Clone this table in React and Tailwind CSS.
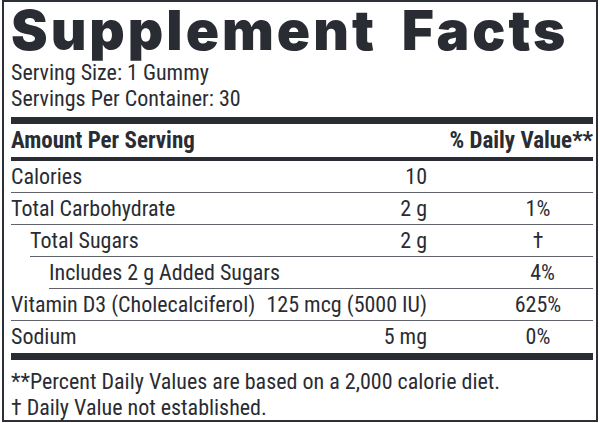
const rows = [
  { name: 'Calories', amount: '10', pct: '', indent: '' },
  { name: 'Total Carbohydrate', amount: '2 g', pct: '1%', indent: '' },
  { name: 'Total Sugars', amount: '2 g', pct: '†', indent: 'ml-[19px]' },
  { name: 'Includes 2 g Added Sugars', amount: '', pct: '4%', indent: 'ml-[38px]' },
  { name: 'Vitamin D3 (Cholecalciferol)', amount: '125 mcg (5000 IU)', pct: '625%', indent: '' },
];

function Row({ name, amount, pct, indent, last }) {
  return (
    <div
      className={
        'flex items-center h-[32px] ' +
        indent +
        (last ? '' : ' border-b border-[#60636b]')
      }
    >
      <div className="flex-1 whitespace-nowrap">{name}</div>
      <div className="w-[170px] text-right whitespace-nowrap">{amount}</div>
      <div className="w-[166px] pl-[56px] text-center">{pct}</div>
    </div>
  );
}

export default function App() {
  return (
    <div className="w-[600px] h-[423px] bg-white overflow-hidden">
      <div className="ml-[2px] w-[596px] h-[422px] border-2 border-[#2e3038] pl-[7px] pr-[3px] text-[#2a2c34] font-['Roboto_Condensed',sans-serif] text-[22px] leading-[26px]">
        <div className="font-['Inter',sans-serif] font-black text-[55px] leading-[57px] tracking-[3px] [word-spacing:11px] whitespace-nowrap">
          Supplement Facts
        </div>
        <div className="mt-[1px]">Serving Size: 1 Gummy</div>
        <div>Servings Per Container: 30</div>
        <div className="mt-[5px] h-[7px] bg-[#2a2c34]" />
        <div className="flex items-center justify-between h-[33px] font-bold text-[23px]">
          <div>Amount Per Serving</div>
          <div>% Daily Value**</div>
        </div>
        <div className="h-[4px] bg-[#2a2c34]" />
        {rows.map((r) => (
          <Row key={r.name} {...r} />
        ))}
        <Row name="Sodium" amount="5 mg" pct="0%" indent="" last />
        <div className="h-[7px] bg-[#2a2c34]" />
        <div className="pt-[9px]">
          <div>**Percent Daily Values are based on a 2,000 calorie diet.</div>
          <div>† Daily Value not established.</div>
        </div>
      </div>
    </div>
  );
}
